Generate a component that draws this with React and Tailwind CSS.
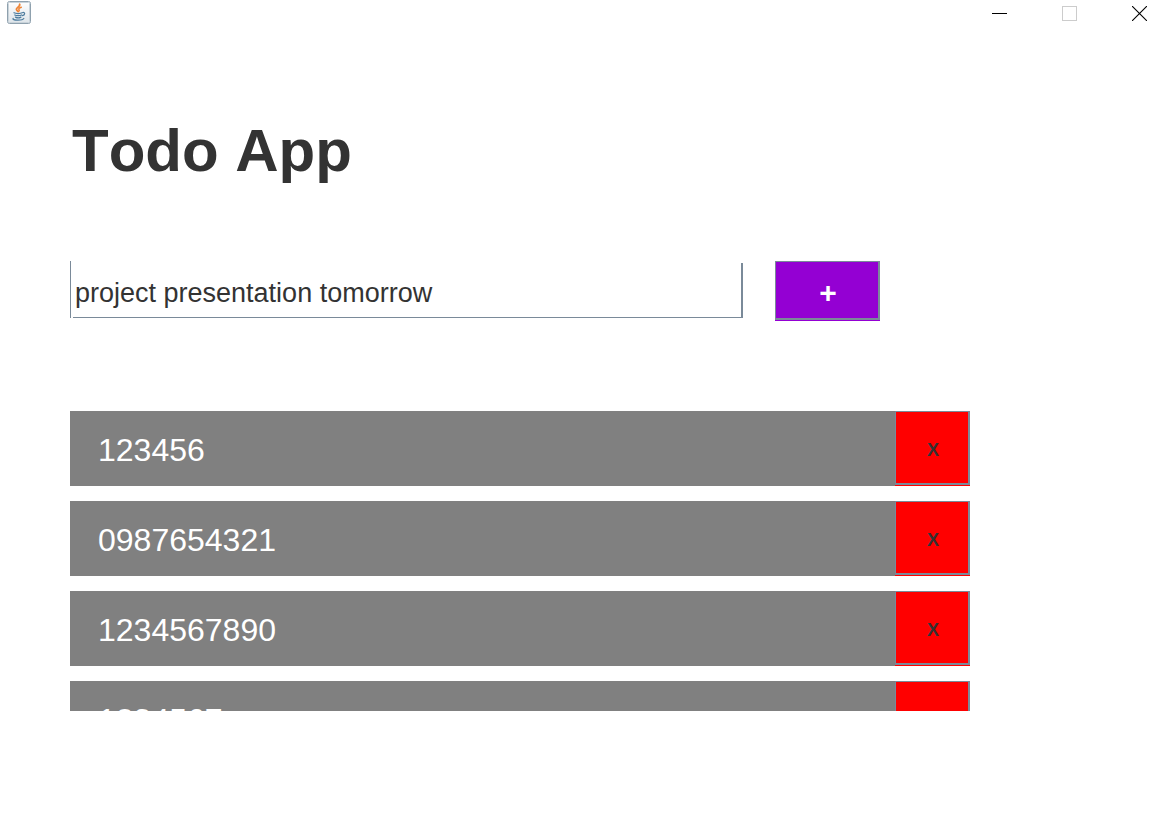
import { useState } from "react";

const initialTodos = ["123456", "0987654321", "1234567890", "1234567"];

function JavaIcon() {
  return (
    <svg width="24" height="24" viewBox="0 0 24 24" fill="none" aria-hidden="true">
      <defs>
        <linearGradient id="tile" x1="0" y1="0" x2="0" y2="1">
          <stop offset="0" stopColor="#ffffff" />
          <stop offset="1" stopColor="#dde4e9" />
        </linearGradient>
      </defs>
      <rect x="0.5" y="0.5" width="23" height="22" rx="2" fill="url(#tile)" stroke="#8fa1ae" />
      <rect x="1.5" y="1.5" width="21" height="20" rx="1" stroke="#c9d3da" />
      <path d="M12.600 3.200c1.200 2.500-3.800 3.200-3.200 5.300.300 1 1.300 1.300 1.600 2" stroke="#ef8537" strokeWidth="1.800" strokeLinecap="round" />
      <path d="M14.300 6.200c-2 .6-3 1.500-2.300 2.500.5.700.2 1.300-.400 1.800" stroke="#ef8537" strokeWidth="1.500" strokeLinecap="round" />
      <path d="M7 11.800c1.800 1 6.400 1 8.200 0M7.800 14c1.600.9 5.200.9 6.800 0M8.500 16.100c1.400.8 4.200.8 5.400 0" stroke="#4d7c9e" strokeWidth="1.300" strokeLinecap="round" />
      <path d="M15.800 11.500c2.600-.6 2.400 2.500-.4 3.200M6.200 17.300c-2.200 2.200 9.200 2.600 10.600.2" stroke="#4d7c9e" strokeWidth="1.200" strokeLinecap="round" />
    </svg>
  );
}

function TitleBar() {
  return (
    <header className="flex h-7 items-start justify-between pt-px pr-[22px] pl-[7px]">
      <JavaIcon />
      <div className="flex gap-[55px] pt-[5px]">
        <button type="button" aria-label="Minimize">
          <svg width="15" height="15" shapeRendering="crispEdges" aria-hidden="true">
            <path d="M0 7.500h15" stroke="#000" />
          </svg>
        </button>
        <button type="button" aria-label="Maximize" disabled>
          <svg width="15" height="15" fill="none" aria-hidden="true">
            <rect x="0.500" y="0.500" width="14" height="14" stroke="#cccccc" />
          </svg>
        </button>
        <button type="button" aria-label="Close">
          <svg width="15" height="15" aria-hidden="true">
            <path d="M0 0l15 15M15 0L0 15" stroke="#000" strokeWidth="1.100" />
          </svg>
        </button>
      </div>
    </header>
  );
}

export default function App() {
  const [todos, setTodos] = useState(initialTodos);
  const [draft, setDraft] = useState("project presentation tomorrow");

  function addTodo(event) {
    event.preventDefault();
    if (!draft.trim()) return;
    setTodos([...todos, draft]);
    setDraft("");
  }

  return (
    <div className="min-h-screen bg-white font-['Liberation_Sans',Arial,sans-serif] text-[#333333] [font-kerning:none]">
      <TitleBar />
      <main className="px-[70px] pt-[87px]">
        <h1 className="pl-0.5 text-[60px] leading-[72px] font-bold">Todo App</h1>

        <form onSubmit={addTodo} className="mt-[74px] flex max-w-[810px] items-start gap-8">
          <div className="flex h-[57px] min-w-0 flex-1 border-l border-[#7a8a99] pt-0.5 pl-0.5">
            <input
              type="text"
              aria-label="New todo"
              value={draft}
              onChange={(event) => setDraft(event.target.value)}
              className="w-full min-w-0 border-r-2 border-b border-[#7a8a99] bg-white pt-1.5 pl-0.5 text-[27px] outline-none"
            />
          </div>
          <button type="submit" aria-label="Add todo" className="flex h-[60px] w-[105px] bg-[#9400d3] pb-px text-[30px] font-bold text-white">
            <span className="flex h-full w-full items-center justify-center border-t border-r-2 border-b-2 border-l border-[#7a8a99] pt-1 pl-0.5">+</span>
          </button>
        </form>

        <ul className="mt-[90px] flex h-[300px] max-w-[900px] flex-col gap-[15px] overflow-y-auto [scrollbar-width:none]">
          {todos.map((todo, index) => (
            <li key={index} className="flex h-[75px] shrink-0 bg-[#808080]">
              <span className="flex min-w-0 flex-1 items-center pt-0.5 pl-7 text-[32px] text-white">{todo}</span>
              <button
                type="button"
                aria-label={`Delete ${todo}`}
                onClick={() => setTodos(todos.filter((_, i) => i !== index))}
                className="flex h-[75px] w-[75px] bg-[#ff0000] pb-px text-[18px] font-bold"
              >
                <span className="flex h-full w-full items-center justify-center border-t border-r-2 border-b-2 border-l border-[#7a8a99] pt-1.5 pl-0.5">X</span>
              </button>
            </li>
          ))}
        </ul>
      </main>
    </div>
  );
}
